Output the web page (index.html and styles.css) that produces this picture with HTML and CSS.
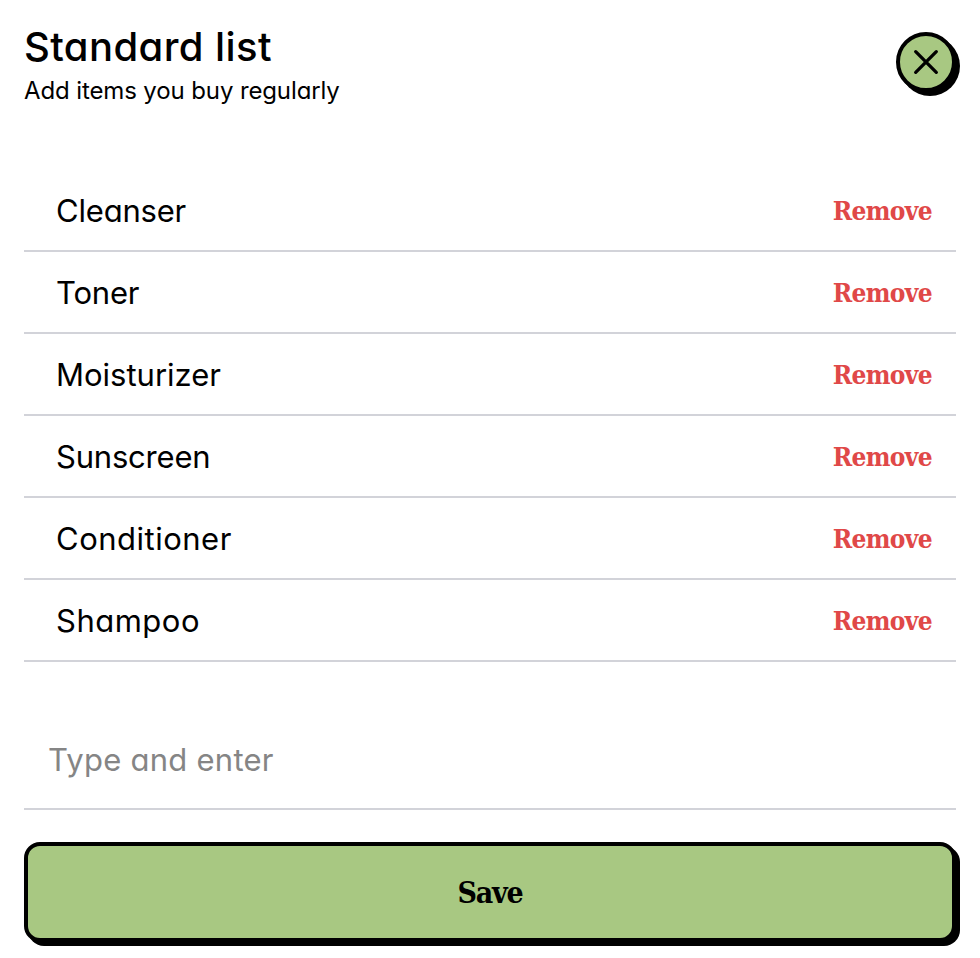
FILE: index.html
```html
<!DOCTYPE html>
<html lang="en">
<head>
<meta charset="utf-8">
<title>Standard list</title>
<link rel="stylesheet" href="styles.css">
</head>
<body>
<main class="sheet">
  <header class="header">
    <div>
      <h1 class="title">Standard list</h1>
      <p class="subtitle">Add items you buy regularly</p>
    </div>
    <button class="close" aria-label="Close">
      <svg width="28" height="28" viewBox="0 0 28 28" fill="none" stroke="#000" stroke-width="3.3" stroke-linecap="round"><path d="M3.7 3.7 24.3 24.3M24.3 3.7 3.7 24.3"/></svg>
    </button>
  </header>
  <ul class="items">
    <li class="item"><span class="name tight">Cleanser</span><button class="remove">Remove</button></li>
    <li class="item"><span class="name tight">Toner</span><button class="remove">Remove</button></li>
    <li class="item"><span class="name">Moisturizer</span><button class="remove">Remove</button></li>
    <li class="item"><span class="name tight">Sunscreen</span><button class="remove">Remove</button></li>
    <li class="item"><span class="name wide">Conditioner</span><button class="remove">Remove</button></li>
    <li class="item"><span class="name wide">Shampoo</span><button class="remove">Remove</button></li>
  </ul>
  <input class="entry" type="text" placeholder="Type and enter">
  <button class="save">Save</button>
</main>
</body>
</html>
```
FILE: styles.css
```css
* { box-sizing: border-box; }
body {
  margin: 0;
  background: #fff;
  color: #000;
  font-family: Inter, Lato, sans-serif;
  font-feature-settings: "cv11";
}
button { font: inherit; color: inherit; padding: 0; cursor: pointer; }
.sheet { padding: 23px 24px 16px; }
.header { display: flex; justify-content: space-between; height: 147px; }
.title { margin: 0; font-size: 40px; font-weight: 500; line-height: 48px; letter-spacing: 0.4px; }
.subtitle { margin: 0; font-size: 24px; line-height: 40px; letter-spacing: -0.12px; }
.close {
  display: flex;
  align-items: center;
  justify-content: center;
  width: 60px;
  height: 60px;
  margin-top: 9px;
  border: 4px solid #000;
  border-radius: 50%;
  background: #a8c882;
  box-shadow: 4px 4px 0 #000;
}
.items { margin: 0; padding: 0; list-style: none; }
.item {
  display: flex;
  align-items: center;
  justify-content: space-between;
  height: 82px;
  padding: 2px 24px 0 32px;
  border-bottom: 2px solid #d2d3d9;
}
.name { font-size: 31px; line-height: 40px; }
.tight { letter-spacing: -0.2px; }
.wide { letter-spacing: 0.5px; }
.remove {
  border: 0;
  background: none;
  color: #e04848;
  font: bold 26px/40px "DejaVu Serif Condensed", "DejaVu Serif", serif;
  font-stretch: condensed;
  letter-spacing: -0.65px;
}
.entry {
  display: block;
  width: 100%;
  height: 98px;
  margin-top: 50px;
  padding: 0 24px 2px;
  border: 0;
  border-bottom: 2px solid #d2d3d9;
  background: none;
  font: inherit;
  font-size: 31px;
  font-feature-settings: "cv11";
  letter-spacing: 0.25px;
}
.entry::placeholder { color: #858585; opacity: 1; }
.save {
  display: block;
  width: 100%;
  height: 100px;
  margin-top: 32px;
  padding-top: 1px;
  border: 4px solid #000;
  border-radius: 16px;
  background: #a8c882;
  box-shadow: 4px 4px 0 #000;
  font: bold 30px/40px "DejaVu Serif Condensed", "DejaVu Serif", serif;
  font-stretch: condensed;
  letter-spacing: -1.2px;
}
```
